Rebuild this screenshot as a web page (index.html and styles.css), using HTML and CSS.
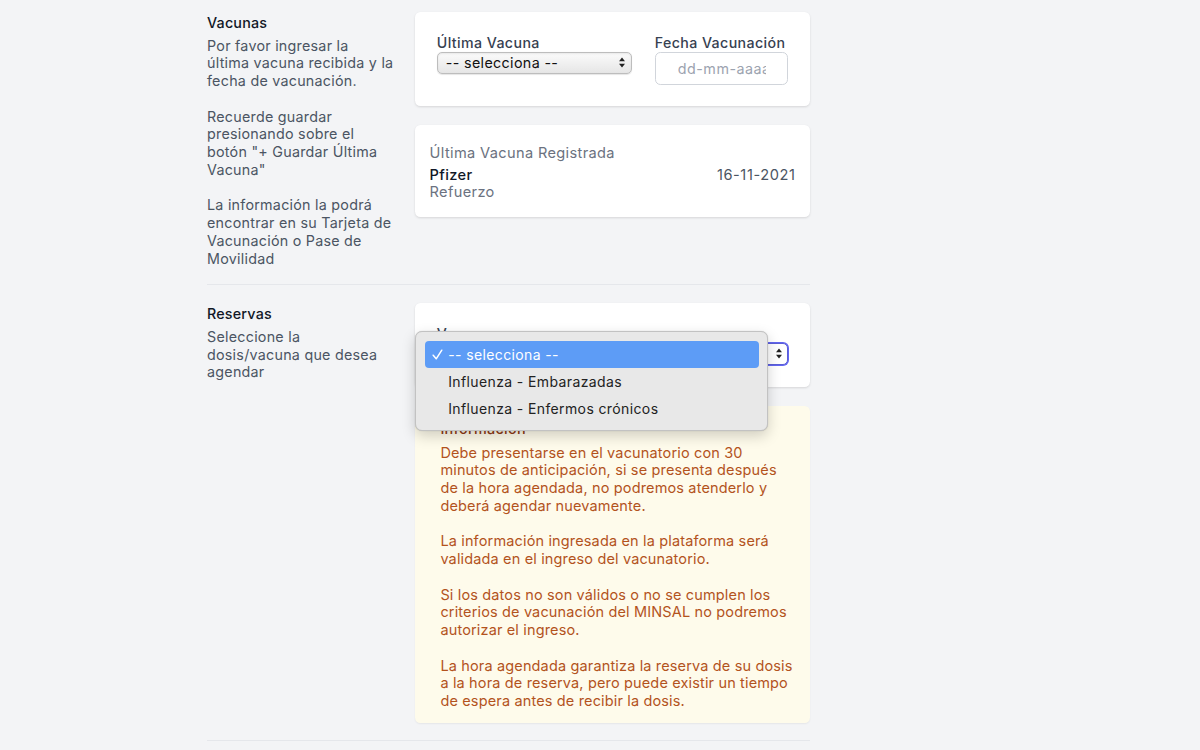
FILE: index.html
```html
<!DOCTYPE html>
<html lang="es">
<head>
<meta charset="utf-8">
<title>Vacunas</title>
<link rel="stylesheet" href="styles.css">
</head>
<body>
<div class="page">
  <section class="section">
    <div class="aside">
      <h3 class="aside-title">Vacunas</h3>
      <p class="aside-text">Por favor ingresar la<br>última vacuna recibida y la<br>fecha de vacunación.<br><br>Recuerde guardar<br>presionando sobre el<br>botón "+ Guardar Última<br>Vacuna"<br><br>La información la podrá<br>encontrar en su Tarjeta de<br>Vacunación o Pase de<br>Movilidad</p>
    </div>
    <div class="main">
      <div class="card card-form">
        <div class="field">
          <div class="label">Última Vacuna</div>
          <div class="select select-mac">
            <span>-- selecciona --</span>
            <svg class="arrows" width="6" height="11" viewBox="0 0 6 11"><path d="M0 4.2 L3 0.5 L6 4.2Z M0 6.8 L3 10.5 L6 6.8Z" fill="#222"/></svg>
          </div>
        </div>
        <div class="field">
          <div class="label">Fecha Vacunación</div>
          <input class="date" type="text" placeholder="dd-mm-aaaa">
        </div>
      </div>
      <div class="card card-last">
        <div class="last-title">Última Vacuna Registrada</div>
        <div class="last-row"><span class="last-name">Pfizer</span><span class="last-date">16-11-2021</span></div>
        <div class="last-sub">Refuerzo</div>
      </div>
    </div>
  </section>

  <div class="divider"></div>

  <section class="section">
    <div class="aside">
      <h3 class="aside-title">Reservas</h3>
      <p class="aside-text">Seleccione la<br>dosis/vacuna que desea<br>agendar</p>
    </div>
    <div class="main">
      <div class="card card-reserve">
        <div class="label">Vacuna</div>
        <div class="select select-focus">
          <span>-- selecciona --</span>
          <svg class="arrows" width="6" height="11" viewBox="0 0 6 11"><path d="M0 4.2 L3 0.5 L6 4.2Z M0 6.8 L3 10.5 L6 6.8Z" fill="#222"/></svg>
        </div>
        <div class="menu">
          <div class="menu-item active">
            <svg class="check" width="11" height="11" viewBox="0 0 11 11"><path d="M1.2 6.2 L4.2 9.8 L9.8 1.2" fill="none" stroke="#fff" stroke-width="1.5" stroke-linecap="round" stroke-linejoin="round"/></svg>
            <span>-- selecciona --</span>
          </div>
          <div class="menu-item">Influenza - Embarazadas</div>
          <div class="menu-item">Influenza - Enfermos crónicos</div>
        </div>
      </div>
      <div class="notice">
        <div class="notice-title">Información</div>
        <p class="notice-text">Debe presentarse en el vacunatorio con 30<br>minutos de anticipación, si se presenta después<br>de la hora agendada, no podremos atenderlo y<br>deberá agendar nuevamente.<br><br>La información ingresada en la plataforma será<br>validada en el ingreso del vacunatorio.<br><br>Si los datos no son válidos o no se cumplen los<br>criterios de vacunación del MINSAL no podremos<br>autorizar el ingreso.<br><br>La hora agendada garantiza la reserva de su dosis<br>a la hora de reserva, pero puede existir un tiempo<br>de espera antes de recibir la dosis.</p>
      </div>
    </div>
  </section>

  <div class="divider"></div>
</div>
</body>
</html>
```

FILE: styles.css
```css
* { box-sizing: border-box; }

body {
  margin: 0;
  background: #f3f4f6;
  font-family: Inter, "Noto Sans", "Liberation Sans", sans-serif;
  font-size: 14px;
  color: #111827;
}

.page {
  margin-left: 207px;
  width: 603px;
  padding-top: 12px;
}

.section {
  display: grid;
  grid-template-columns: 186.6px 1fr;
  column-gap: 21.6px;
  align-items: start;
}

.aside-title {
  margin: 0;
  font-size: 14.3px;
  font-weight: 500;
  line-height: 21.6px;
  letter-spacing: 0.2px;
  color: #111827;
}

.aside-text {
  margin: 3px 0 0;
  font-size: 14.3px;
  line-height: 17.75px;
  letter-spacing: 0.25px;
  color: #4b5563;
}

.divider {
  border-top: 1px solid #e5e7eb;
  margin: 17px 0 18px;
}

.card {
  background: #fff;
  border-radius: 5.4px;
  box-shadow: 0 1px 3px rgba(0, 0, 0, 0.08), 0 1px 2px rgba(0, 0, 0, 0.05);
}

.card-form {
  display: flex;
  align-items: flex-start;
  gap: 23px;
  padding: 21.6px;
}

.label {
  font-size: 14.2px;
  font-weight: 500;
  line-height: 18px;
  letter-spacing: 0.4px;
  color: #374151;
}

.select {
  height: 22px;
  display: flex;
  align-items: center;
  justify-content: space-between;
  padding: 0 6px 0 8px;
  border-radius: 5px;
  font-size: 14.3px;
  letter-spacing: 0.35px;
  color: #111;
}

.select-mac {
  width: 195px;
  background: linear-gradient(#fbfbfb, #e6e6e6);
  border: 1px solid #bdbdbd;
  box-shadow: inset 0 1px 2px rgba(0, 0, 0, 0.08), 0 0.5px 1px rgba(0, 0, 0, 0.1);
}

.select-focus {
  width: 100%;
  background: #fff;
  border: 1px solid #5b5fd6;
  box-shadow: 0 0 0 1px #6366f1;
  padding-right: 5px;
}

.date {
  display: block;
  width: 133px;
  height: 33px;
  padding: 0 21px 0 22px;
  border: 1px solid #d1d5db;
  border-radius: 5.4px;
  font-family: inherit;
  font-size: 14.3px;
  letter-spacing: 0.5px;
  background: #fff;
  outline: none;
}

.date::placeholder {
  color: #9ca3af;
}

.card-last {
  margin-top: 19px;
  padding: 18px 14.4px 16.5px;
  font-size: 14.6px;
  letter-spacing: 0.35px;
}

.last-title {
  line-height: 21.6px;
  color: #6b7280;
}

.last-row {
  margin-top: 2px;
  display: flex;
  justify-content: space-between;
  line-height: 17px;
}

.last-name {
  font-weight: 500;
  color: #111827;
}

.last-date {
  color: #4b5563;
  letter-spacing: 0.6px;
}

.last-sub {
  line-height: 17px;
  color: #6b7280;
}

.card-reserve {
  position: relative;
  padding: 21.6px;
}

.menu {
  position: absolute;
  left: 0;
  top: 28px;
  width: 353px;
  padding: 9px 8px 8px 9px;
  background: #e8e8e8;
  border: 0.5px solid #c2c2c2;
  border-radius: 7px;
  box-shadow: 0 5px 14px rgba(0, 0, 0, 0.18), 0 0 1px rgba(0, 0, 0, 0.2);
  z-index: 5;
}

.menu-item {
  height: 27px;
  display: flex;
  align-items: center;
  padding-left: 23px;
  border-radius: 4px;
  font-size: 14px;
  letter-spacing: 0.38px;
  color: #222;
}

.menu-item.active {
  background: #5d9cf6;
  color: #fff;
  padding-left: 7px;
}

.check {
  width: 11px;
  margin-right: 5px;
}

.notice {
  margin-top: 19.5px;
  padding: 13.5px 10px 13.5px 25.2px;
  background: #fefbeb;
  border-radius: 5.4px;
  box-shadow: 0 1px 2px rgba(0, 0, 0, 0.06);
}

.notice-title {
  font-size: 14.4px;
  font-weight: 500;
  line-height: 18px;
  letter-spacing: 0.3px;
  color: #8f3a14;
}

.notice-text {
  margin: 6px 0 0;
  font-size: 14.5px;
  line-height: 17.75px;
  letter-spacing: 0.15px;
  white-space: nowrap;
  color: #b3531d;
}
```
